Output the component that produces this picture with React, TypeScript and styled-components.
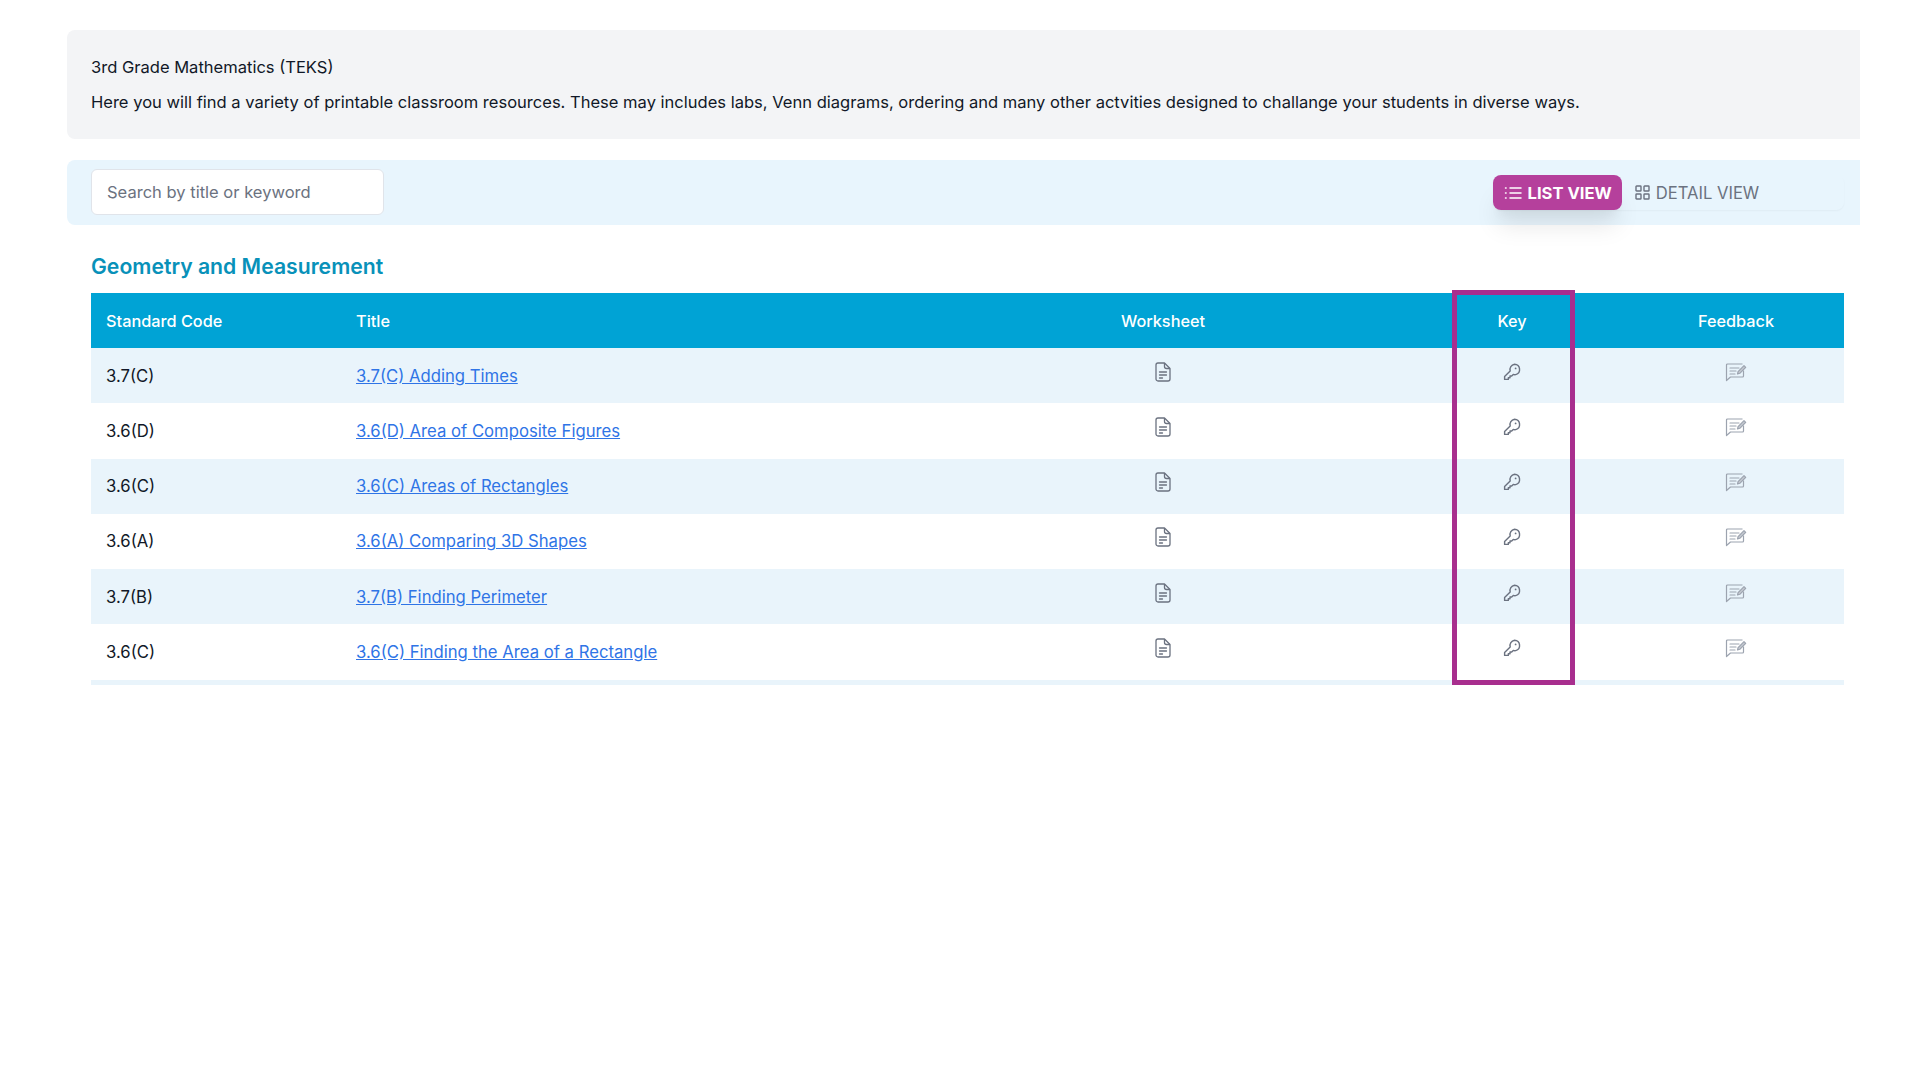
import React from "react";
import styled, { createGlobalStyle } from "styled-components";

const Global = createGlobalStyle`
  html, body { margin: 0; padding: 0; background: #fff; }
  body { font-family: Inter, "Liberation Sans", sans-serif; color: #111827; }
`;

const Page = styled.div`
  position: relative;
  width: 1920px;
  height: 1080px;
  padding: 30px 60px 0 67px;
  box-sizing: border-box;
  overflow: hidden;
`;

const Intro = styled.section`
  height: 109px;
  padding: 25px 24px 0;
  box-sizing: border-box;
  background: #f3f4f6;
  border-radius: 8px 0 0 8px;
  font-size: 16.55px;
  line-height: 24px;
  color: #111827;
`;

const IntroLine = styled.p`
  margin: 0 0 11px;
`;

const Toolbar = styled.section`
  margin-top: 21px;
  height: 65px;
  padding: 9px 16px 0 24px;
  box-sizing: border-box;
  display: flex;
  justify-content: space-between;
  align-items: flex-start;
  background: #e8f5fd;
  border-radius: 8px 0 0 8px;
`;

const Search = styled.input`
  width: 293px;
  height: 46px;
  box-sizing: border-box;
  padding: 0 15px;
  border: 1px solid #e0e4ea;
  border-radius: 6px;
  background: #fff;
  font: 16.55px Inter, sans-serif;
  color: #111827;
  &::placeholder { color: #6b7280; opacity: 1; }
`;

const ViewToggle = styled.div`
  margin-top: 6px;
  width: 351px;
  height: 35px;
  display: flex;
  border-radius: 8px;
  box-shadow: 0 1px 2px rgba(0, 0, 0, 0.04);
`;

const ViewButton = styled.button<{ $active?: boolean }>`
  height: 35px;
  padding: 0 ${(p) => (p.$active ? "10px 0 10.5px" : "13px")};
  display: flex;
  align-items: center;
  gap: 6px;
  border: 0;
  border-radius: 8px;
  font-family: Inter, sans-serif;
  font-size: 16.6px;
  font-weight: ${(p) => (p.$active ? 700 : 400)};
  color: ${(p) => (p.$active ? "#fff" : "#6b7280")};
  background: ${(p) => (p.$active ? "#b5409c" : "transparent")};
  box-shadow: ${(p) =>
    p.$active
      ? "0 20px 25px -5px rgba(0,0,0,.1), 0 10px 10px -5px rgba(0,0,0,.04)"
      : "none"};
`;

const Heading = styled.h2`
  margin: 29px 0 0 24px;
  height: 39px;
  font-size: 21.2px;
  line-height: 24px;
  font-weight: 600;
  color: #0891b9;
`;

const Table = styled.table`
  margin-left: 24px;
  width: 1753px;
  table-layout: fixed;
  border-collapse: collapse;
  font-size: 16.7px;
`;

const HeadRow = styled.tr`
  height: 55px;
  background: #00a3d5;
  color: #fff;
`;

const HeadCell = styled.th<{ $center?: boolean }>`
  padding: 0 15px;
  font-size: 16.3px;
  font-weight: 500;
  text-align: ${(p) => (p.$center ? "center" : "left")};
`;

const Row = styled.tr`
  height: 55.25px;
  &:nth-child(odd) { background: #e9f4fb; }
`;

const Cell = styled.td`
  padding: 0 15px;
  color: #111827;
`;

const IconCell = styled.td`
  padding: 0 0 8px;
  text-align: center;
  line-height: 0;
`;

const TitleLink = styled.a`
  color: #2f74e6;
  text-decoration: underline;
`;

const TableEnd = styled.div`
  margin-left: 24px;
  width: 1753px;
  height: 5px;
  background: #e9f4fb;
`;

const Highlight = styled.div`
  position: absolute;
  left: 1452px;
  top: 290px;
  width: 123px;
  height: 395px;
  box-sizing: border-box;
  border: 5px solid #a82e8e;
`;

const ListIcon = () => (
  <svg width="18" height="18" viewBox="0 0 18 18" fill="none" stroke="currentColor" strokeWidth="1.5" strokeLinecap="round">
    <path d="M6 4h11M6 9h11M6 14h11M1.5 4h.6M1.5 9h.6M1.5 14h.6" />
  </svg>
);

const GridIcon = () => (
  <svg width="15" height="15" viewBox="0 0 15 15" fill="none" stroke="currentColor" strokeWidth="1.4">
    <rect x="1" y="1" width="5" height="5" rx=".6" />
    <rect x="9" y="1" width="5" height="5" rx=".6" />
    <rect x="1" y="9" width="5" height="5" rx=".6" />
    <rect x="9" y="9" width="5" height="5" rx=".6" />
  </svg>
);

const DocIcon = () => (
  <svg width="16" height="20" viewBox="0 0 16 20" fill="none" stroke="#6b7280" strokeWidth="1.3" strokeLinejoin="round">
    <path d="M3 1h6.5L15 6.5V17a2 2 0 0 1-2 2H3a2 2 0 0 1-2-2V3a2 2 0 0 1 2-2Z" />
    <path d="M9.5 1v3.5a2 2 0 0 0 2 2H15" />
    <path d="M4.5 10h7M4.5 13h7M4.5 16h3" strokeLinecap="round" />
  </svg>
);

const KeyIcon = () => (
  <svg width="18" height="18" viewBox="0 0 18 18" fill="none" stroke="#6b7280" strokeWidth="1.4" strokeLinejoin="round">
    <path d="M11.5 1.2a5.3 5.3 0 0 1 1.2 10.4c-.8.2-1.7.1-2.4-.2L8.7 13H7v1.7H5.3v1.7H1.6v-2.9l5.6-5.6a5.3 5.3 0 0 1 4.3-6.7Z" />
    <circle cx="12.6" cy="5.4" r=".9" fill="#6b7280" stroke="none" />
  </svg>
);

const FeedbackIcon = () => (
  <svg width="22" height="20" viewBox="0 0 22 20" fill="none" stroke="#9ca3af" strokeWidth="1.2" strokeLinejoin="round">
    <path d="M18.5 8.5V14a1 1 0 0 1-1 1H5.5L1.5 18.5V3a1 1 0 0 1 1-1h15" />
    <path d="M5 6h9M5 9h6M5 12h5" strokeLinecap="round" />
    <path d="M12.5 12l.6-2.4L19 3.7l1.7 1.7-5.9 5.9-2.3.7Z" fill="#c4c9d0" />
  </svg>
);

const rows = [
  ["3.7(C)", "3.7(C) Adding Times"],
  ["3.6(D)", "3.6(D) Area of Composite Figures"],
  ["3.6(C)", "3.6(C) Areas of Rectangles"],
  ["3.6(A)", "3.6(A) Comparing 3D Shapes"],
  ["3.7(B)", "3.7(B) Finding Perimeter"],
  ["3.6(C)", "3.6(C) Finding the Area of a Rectangle"],
];

export default function App() {
  return (
    <Page>
      <Global />
      <Intro>
        <IntroLine>3rd Grade Mathematics (TEKS)</IntroLine>
        <IntroLine>
          Here you will find a variety of printable classroom resources. These may includes labs, Venn diagrams, ordering and many other actvities designed to challange your students in diverse ways.
        </IntroLine>
      </Intro>
      <Toolbar>
        <Search placeholder="Search by title or keyword" />
        <ViewToggle>
          <ViewButton $active>
            <ListIcon />
            LIST VIEW
          </ViewButton>
          <ViewButton>
            <GridIcon />
            DETAIL VIEW
          </ViewButton>
        </ViewToggle>
      </Toolbar>
      <Heading>Geometry and Measurement</Heading>
      <Table>
        <colgroup>
          <col width="250" />
          <col width="589" />
          <col width="466" />
          <col width="232" />
          <col width="216" />
        </colgroup>
        <thead>
          <HeadRow>
            <HeadCell>Standard Code</HeadCell>
            <HeadCell>Title</HeadCell>
            <HeadCell $center>Worksheet</HeadCell>
            <HeadCell $center>Key</HeadCell>
            <HeadCell $center>Feedback</HeadCell>
          </HeadRow>
        </thead>
        <tbody>
          {rows.map(([code, title], i) => (
            <Row key={i}>
              <Cell>{code}</Cell>
              <Cell>
                <TitleLink href="#">{title}</TitleLink>
              </Cell>
              <IconCell><DocIcon /></IconCell>
              <IconCell><KeyIcon /></IconCell>
              <IconCell><FeedbackIcon /></IconCell>
            </Row>
          ))}
        </tbody>
      </Table>
      <TableEnd />
      <Highlight />
    </Page>
  );
}
